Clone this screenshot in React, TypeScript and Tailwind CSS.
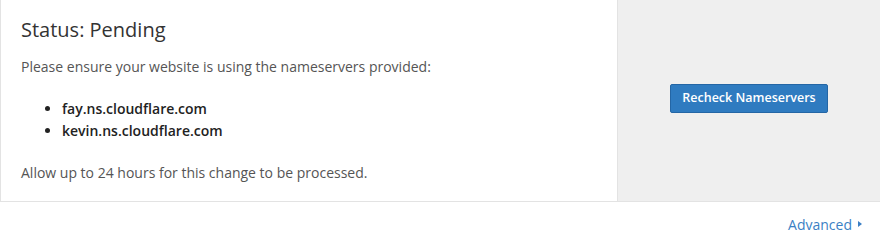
export default function App() {
  const nameservers = ["fay.ns.cloudflare.com", "kevin.ns.cloudflare.com"]

  return (
    <div className="w-[880px] h-[239px] bg-white font-['Open_Sans',sans-serif]">
      <div className="flex h-[202px] border-l border-b border-[#e3e3e3]">
        <div className="flex-1 pl-5 pt-[17px]">
          <h2 className="text-[20px] leading-[26px] text-[#333]">Status: Pending</h2>
          <p className="mt-[14px] text-[14px] leading-5 text-[#555]">
            Please ensure your website is using the nameservers provided:
          </p>
          <ul className="mt-[21px] list-disc pl-[41px] text-[14px] leading-[22px] font-semibold text-[#222]">
            {nameservers.map((ns) => (
              <li key={ns}>{ns}</li>
            ))}
          </ul>
          <p className="mt-[21px] text-[14px] leading-5 text-[#555]">
            Allow up to 24 hours for this change to be processed.
          </p>
        </div>
        <div className="w-[263px] flex items-center justify-center bg-[#efefef] border-l border-[#e3e3e3] pb-1">
          <button className="h-[29px] w-[158px] rounded-[2px] bg-[#2f7bc0] border border-[#2466a5] text-white text-[12.5px] font-semibold">
            Recheck Nameservers
          </button>
        </div>
      </div>
      <div className="flex justify-end items-center pr-[18px] pt-[7px] h-[37px]">
        <a className="flex items-center gap-[6px] text-[14px] text-[#3b7fc4]">
          Advanced
          <span className="w-0 h-0 border-y-[3px] border-y-transparent border-l-[4px] border-l-[#3b7fc4]" />
        </a>
      </div>
    </div>
  )
}
